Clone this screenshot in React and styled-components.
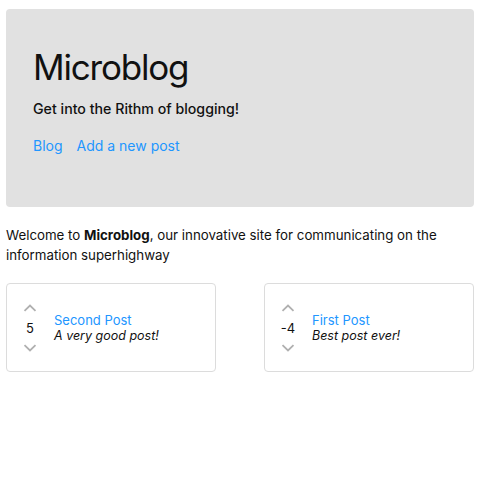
import React from "react";
import styled, { createGlobalStyle } from "styled-components";

const posts = [
  { id: 2, title: "Second Post", description: "A very good post!", votes: 5 },
  { id: 1, title: "First Post", description: "Best post ever!", votes: -4 },
];

export default function App() {
  return (
    <>
      <GlobalStyle />
      <Page>
        <Jumbotron>
          <Title>Microblog</Title>
          <Tagline>Get into the Rithm of blogging!</Tagline>
          <Nav>
            <NavLink href="#">Blog</NavLink>
            <NavLink href="#">Add a new post</NavLink>
          </Nav>
        </Jumbotron>
        <Intro>
          Welcome to <b>Microblog</b>, our innovative site for communicating on
          the information superhighway
        </Intro>
        <PostGrid>
          {posts.map((post) => (
            <Card key={post.id}>
              <Votes>
                <Arrow>
                  <svg width="14" height="8" viewBox="0 0 14 8">
                    <path d="M1.5 6.8 L7 1.5 L12.5 6.8" />
                  </svg>
                </Arrow>
                <Count>{post.votes}</Count>
                <Arrow>
                  <svg width="14" height="8" viewBox="0 0 14 8">
                    <path d="M1.5 1.2 L7 6.5 L12.5 1.2" />
                  </svg>
                </Arrow>
              </Votes>
              <PostBody>
                <PostTitle href="#">{post.title}</PostTitle>
                <PostDesc>{post.description}</PostDesc>
              </PostBody>
            </Card>
          ))}
        </PostGrid>
      </Page>
    </>
  );
}

const GlobalStyle = createGlobalStyle`
  body {
    margin: 0;
    background: #fff;
    color: #111;
    font-family: Inter, "Liberation Sans", sans-serif;
  }
`;

const Page = styled.div`
  padding: 9px 6px;
`;

const Jumbotron = styled.header`
  background: #e1e1e1;
  border-radius: 4px;
  height: 198px;
  box-sizing: border-box;
  padding: 35px 27px 0;
`;

const Title = styled.h1`
  margin: 0;
  font-size: 35px;
  font-weight: 400;
  line-height: 46px;
  letter-spacing: -1.2px;
`;

const Tagline = styled.p`
  margin: 9px 0 0;
  font-size: 14.2px;
  line-height: 20px;
  font-weight: 500;
`;

const Nav = styled.nav`
  display: flex;
  gap: 14px;
  margin-top: 17px;
`;

const NavLink = styled.a`
  color: #2196ff;
  text-decoration: none;
  font-size: 14px;
  line-height: 20px;
`;

const Intro = styled.p`
  margin: 18px 0 0;
  font-size: 13.3px;
  line-height: 20px;
`;

const PostGrid = styled.div`
  display: grid;
  grid-template-columns: 210px 210px;
  justify-content: space-between;
  margin-top: 18px;
`;

const Card = styled.div`
  display: flex;
  align-items: center;
  gap: 16px;
  height: 89px;
  box-sizing: border-box;
  border: 1px solid #dcdcdc;
  border-radius: 4px;
  padding: 0 15px;
`;

const Votes = styled.div`
  display: flex;
  flex-direction: column;
  align-items: center;
  gap: 5px;
  width: 16px;
`;

const Arrow = styled.span`
  display: flex;
  svg {
    fill: none;
    stroke: #b0b0b0;
    stroke-width: 1.8;
  }
`;

const Count = styled.span`
  font-size: 13px;
  line-height: 22px;
`;

const PostBody = styled.div`
  display: flex;
  flex-direction: column;
`;

const PostTitle = styled.a`
  color: #2196ff;
  text-decoration: none;
  font-size: 13px;
  line-height: 16px;
`;

const PostDesc = styled.span`
  font-size: 12.5px;
  line-height: 16px;
  font-style: italic;
`;
